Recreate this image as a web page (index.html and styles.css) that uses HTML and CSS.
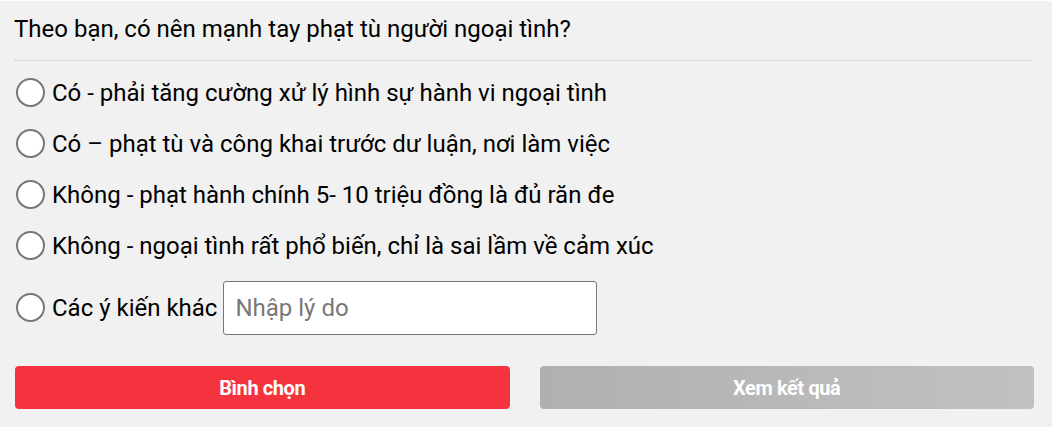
FILE: index.html
```html
<!DOCTYPE html>
<html lang="vi">
<head>
<meta charset="utf-8">
<link rel="stylesheet" href="styles.css">
</head>
<body>
<div class="poll">
  <div class="poll-title">Theo bạn, có nên mạnh tay phạt tù người ngoại tình?</div>
  <div class="poll-options">
    <label class="opt"><span class="radio"></span><span class="opt-text">Có - phải tăng cường xử lý hình sự hành vi ngoại tình</span></label>
    <label class="opt"><span class="radio"></span><span class="opt-text">Có – phạt tù và công khai trước dư luận, nơi làm việc</span></label>
    <label class="opt"><span class="radio"></span><span class="opt-text">Không - phạt hành chính 5- 10 triệu đồng là đủ răn đe</span></label>
    <label class="opt"><span class="radio"></span><span class="opt-text">Không - ngoại tình rất phổ biến, chỉ là sai lầm về cảm xúc</span></label>
    <label class="opt opt-other"><span class="radio"></span><span class="opt-text">Các ý kiến khác</span><span class="reason">Nhập lý do</span></label>
  </div>
  <div class="poll-actions">
    <div class="btn btn-vote">Bình chọn</div>
    <div class="btn btn-result">Xem kết quả</div>
  </div>
</div>
</body>
</html>
```
FILE: styles.css
```css
html, body {
  margin: 0;
  padding: 0;
  background: #ffffff;
}
body {
  font-family: Roboto, "Liberation Sans", Arial, sans-serif;
  color: #000;
}
.poll {
  margin-top: 1px;
  width: 1052px;
  height: 440px;
  box-sizing: border-box;
  background: #f1f1f1;
  border-top-right-radius: 4px;
  padding: 0 18px 0 15px;
}
.poll-title {
  font-size: 24px;
  line-height: 28px;
  padding-top: 14px;
  padding-bottom: 17px;
  border-bottom: 1px dotted #cccccc;
  margin-left: -1px;
}
.poll-options {
  display: flex;
  flex-direction: column;
  padding-top: 6px;
}
.opt {
  display: flex;
  align-items: center;
  height: 51px;
  font-size: 24px;
}
.radio {
  width: 25px;
  height: 25px;
  border: 2px solid #777777;
  border-radius: 50%;
  background: #ffffff;
  margin-left: 1px;
  margin-right: 7px;
  flex: none;
}
.opt-other {
  height: 73px;
}
.reason {
  margin-left: 6px;
  width: 374px;
  height: 54px;
  box-sizing: border-box;
  border: 1px solid #777777;
  border-radius: 3px;
  background: #ffffff;
  color: #777777;
  padding-left: 11px;
  display: flex;
  align-items: center;
}
.poll-actions {
  display: flex;
  gap: 30px;
  margin-top: 22px;
}
.btn {
  flex: 1;
  height: 43px;
  border-radius: 4px;
  display: flex;
  align-items: center;
  justify-content: center;
  color: #ffffff;
  font-weight: bold;
  font-size: 20px;
  letter-spacing: -0.4px;
}
.btn-vote {
  background: #f5333f;
}
.btn-result {
  background: linear-gradient(to right, #b0b0b0, #c1c1c1);
}
```
